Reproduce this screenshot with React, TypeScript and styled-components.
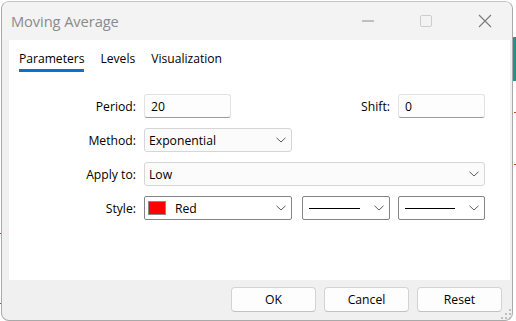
import React from "react";
import styled, { createGlobalStyle } from "styled-components";

const GlobalStyle = createGlobalStyle`
  html, body { margin: 0; padding: 0; background: #ffffff; }
  body { font-family: "Open Sans", "Noto Sans", "Liberation Sans", sans-serif; color: #000; }
  * { box-sizing: border-box; }
`;

const Screen = styled.div`
  position: relative;
  width: 516px;
  height: 321px;
  overflow: hidden;
  display: flex;
  padding: 1px 3px 0 1px;
  background: #ffffff;
`;

const Mark = styled.div<{ $x: number; $y: number; $w: number; $h: number; $c: string }>`
  position: absolute;
  left: ${(p) => p.$x}px;
  top: ${(p) => p.$y}px;
  width: ${(p) => p.$w}px;
  height: ${(p) => p.$h}px;
  background: ${(p) => p.$c};
`;

const Window = styled.div`
  position: relative;
  width: 512px;
  height: 320px;
  border: 1px solid #a9a9a9;
  border-top-color: #c4c4c4;
  border-radius: 8px;
  background: #f0f0f0;
  display: flex;
  flex-direction: column;
  overflow: hidden;
`;

const TitleBar = styled.div`
  height: 38px;
  flex: none;
  background: #f3f3f3;
  display: flex;
  align-items: center;
`;

const Title = styled.div`
  flex: 1;
  padding-left: 9px;
  font-size: 14.7px;
  color: #8b8b8b;
  letter-spacing: -0.1px;
`;

const CaptionButton = styled.div<{ $w: number }>`
  width: ${(p) => p.$w}px;
  height: 38px;
  display: flex;
  align-items: center;
  justify-content: center;
`;

const Panel = styled.div`
  height: 240px;
  flex: none;
  margin: 0 2px 0 7px;
  background: #ffffff;
  display: flex;
  flex-direction: column;
`;

const TabBar = styled.div`
  display: flex;
  gap: 16px;
  padding: 0 10px;
`;

const Tab = styled.div<{ $active?: boolean }>`
  padding-top: 10px;
  padding-bottom: 2px;
  line-height: 17px;
  font-size: 12.1px;
  color: #000;
  border-bottom: 3px solid ${(p) => (p.$active ? "#0a72cc" : "transparent")};
`;

const Form = styled.div`
  margin-top: 22px;
  display: grid;
  grid-template-columns: 127px 148px 90px 87px;
  column-gap: 8px;
  row-gap: 10px;
  grid-auto-rows: 24px;
  align-items: center;
`;

const Label = styled.div`
  text-align: right;
  font-size: 12.2px;
  color: #000;
  white-space: nowrap;
`;

const TextField = styled.input`
  width: 87px;
  height: 24px;
  border: 1px solid #e2e2e2;
  border-bottom-color: #9c9c9c;
  border-radius: 3px;
  background: #fdfdfd;
  padding: 0 6px;
  font-family: inherit;
  font-size: 12.2px;
  color: #000;
  outline: none;
`;

const Select = styled.div<{ $dark?: boolean; $span?: string; $width?: number }>`
  grid-column: ${(p) => p.$span ?? "auto"};
  justify-self: ${(p) => (p.$width ? "end" : "stretch")};
  width: ${(p) => (p.$width ? `${p.$width}px` : "auto")};
  height: 24px;
  display: flex;
  align-items: center;
  border: 1px solid ${(p) => (p.$dark ? "#858585" : "#d6d6d6")};
  border-radius: ${(p) => (p.$dark ? "2px" : "3px")};
  background: ${(p) => (p.$dark ? "#ffffff" : "#fbfbfb")};
  padding: 0 5px 0 3px;
  font-size: 12.2px;
  color: #000;
`;

const SelectText = styled.div`
  flex: 1;
  padding-left: 1px;
  white-space: nowrap;
`;

const Swatch = styled.div<{ $color: string }>`
  width: 18px;
  height: 14px;
  border: 1px solid #8a8a8a;
  background: ${(p) => p.$color};
  margin-right: 8px;
`;

const LineSample = styled.div`
  flex: 1;
  height: 1px;
  background: #000;
  margin: 0 14px 0 3px;
`;

const Footer = styled.div`
  flex: 1;
  display: flex;
  justify-content: flex-end;
  align-items: flex-start;
  gap: 8px;
  padding: 7px 10px 0 0;
`;

const Button = styled.div`
  width: 85px;
  height: 25px;
  border: 1px solid #d3d3d3;
  border-bottom-color: #c2c2c2;
  border-radius: 4px;
  background: #fdfdfd;
  display: flex;
  align-items: center;
  justify-content: center;
  font-size: 12.2px;
  color: #000;
`;

const Grip = styled.svg`
  position: absolute;
  right: 0;
  bottom: 0;
`;

const Chevron = () => (
  <svg width="10" height="6" viewBox="0 0 10 6">
    <path d="M0.5 0.8 L5 5 L9.5 0.8" fill="none" stroke="#5c5c5c" strokeWidth="1" />
  </svg>
);

export default function App() {
  return (
    <>
      <GlobalStyle />
      <Screen>
        <Mark $x={0} $y={233} $w={1} $h={1} $c="#e03030" />
        <Mark $x={0} $y={303} $w={1} $h={1} $c="#e03030" />
        <Mark $x={513} $y={37} $w={3} $h={44} $c="#2c8f86" />
        <Mark $x={514} $y={112} $w={2} $h={1} $c="#e03030" />
        <Mark $x={514} $y={164} $w={2} $h={1} $c="#e03030" />
        <Window>
          <TitleBar>
            <Title>Moving Average</Title>
            <CaptionButton $w={50}>
              <svg width="12" height="2" viewBox="0 0 12 2">
                <line x1="0" y1="1" x2="12" y2="1" stroke="#8a8a8a" strokeWidth="1" />
              </svg>
            </CaptionButton>
            <CaptionButton $w={65}>
              <svg width="12" height="12" viewBox="0 0 12 12">
                <rect x="0.5" y="0.5" width="11" height="11" rx="1.5" fill="none" stroke="#cdcdcd" strokeWidth="1" />
              </svg>
            </CaptionButton>
            <CaptionButton $w={54}>
              <svg width="14" height="14" viewBox="0 0 14 14">
                <path d="M1 1 L13 13 M13 1 L1 13" stroke="#7a7a7a" strokeWidth="1.1" />
              </svg>
            </CaptionButton>
          </TitleBar>
          <Panel>
            <TabBar>
              <Tab $active>Parameters</Tab>
              <Tab>Levels</Tab>
              <Tab>Visualization</Tab>
            </TabBar>
            <Form>
              <Label>Period:</Label>
              <TextField value="20" readOnly />
              <Label>Shift:</Label>
              <TextField value="0" readOnly />

              <Label>Method:</Label>
              <Select>
                <SelectText>Exponential</SelectText>
                <Chevron />
              </Select>
              <div />
              <div />

              <Label>Apply to:</Label>
              <Select $span="2 / 5">
                <SelectText>Low</SelectText>
                <Chevron />
              </Select>

              <Label>Style:</Label>
              <Select $dark>
                <Swatch $color="#ff0000" />
                <SelectText>Red</SelectText>
                <Chevron />
              </Select>
              <Select $dark $width={88}>
                <LineSample />
                <Chevron />
              </Select>
              <Select $dark>
                <LineSample />
                <Chevron />
              </Select>
            </Form>
          </Panel>
          <Footer>
            <Button>OK</Button>
            <Button>Cancel</Button>
            <Button>Reset</Button>
          </Footer>
          <Grip width="11" height="11" viewBox="0 0 11 11">
            <rect x="8" y="0" width="2" height="2" fill="#bdbdbd" />
            <rect x="4" y="4" width="2" height="2" fill="#bdbdbd" />
            <rect x="8" y="4" width="2" height="2" fill="#bdbdbd" />
            <rect x="0" y="8" width="2" height="2" fill="#bdbdbd" />
            <rect x="4" y="8" width="2" height="2" fill="#bdbdbd" />
            <rect x="8" y="8" width="2" height="2" fill="#bdbdbd" />
          </Grip>
        </Window>
      </Screen>
    </>
  );
}
